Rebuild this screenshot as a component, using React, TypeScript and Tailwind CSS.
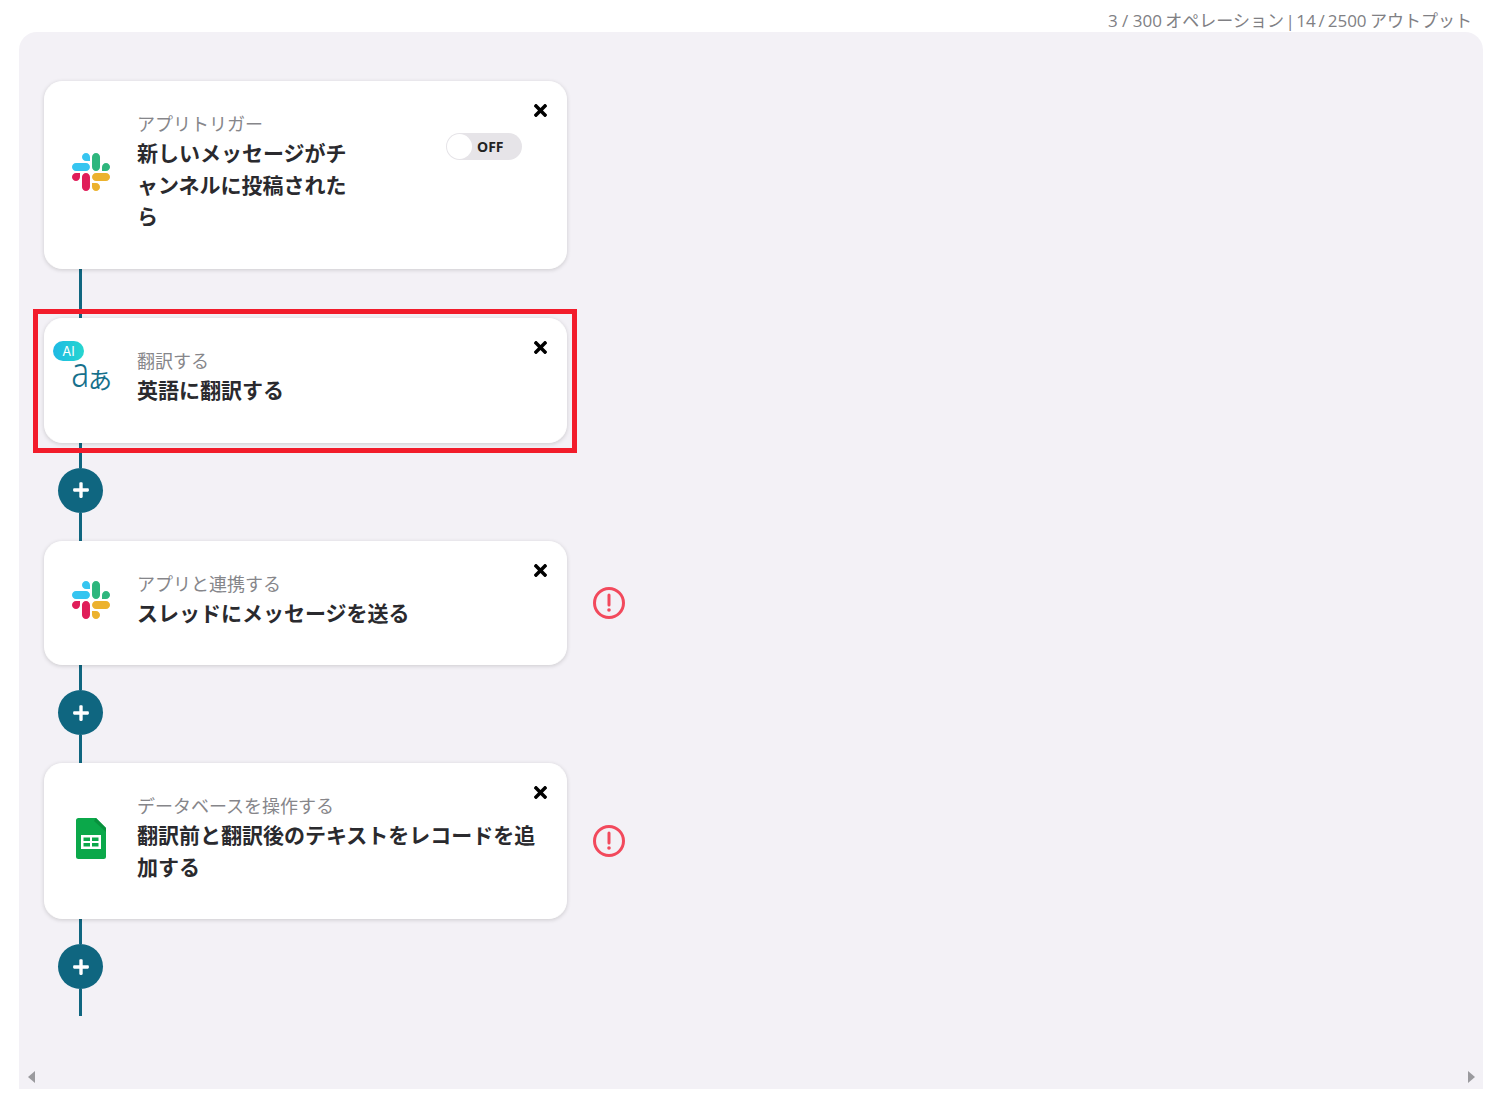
import { FaPlus, FaTimes } from "react-icons/fa";
import type { ReactNode } from "react";

const SlackLogo = () => (
    <svg className="w-[38px] h-[38px]" viewBox="0 0 122.8 122.8">
        <path fill="#E01E5A" d="M25.8 77.6c0 7.1-5.8 12.9-12.9 12.9S0 84.7 0 77.6s5.8-12.9 12.9-12.9h12.9v12.9z" />
        <path fill="#E01E5A" d="M32.3 77.6c0-7.1 5.8-12.9 12.9-12.9s12.9 5.8 12.9 12.9v32.3c0 7.1-5.8 12.9-12.9 12.9s-12.9-5.8-12.9-12.9V77.6z" />
        <path fill="#36C5F0" d="M45.2 25.8c-7.1 0-12.9-5.8-12.9-12.9S38.1 0 45.2 0s12.9 5.8 12.9 12.9v12.9H45.2z" />
        <path fill="#36C5F0" d="M45.2 32.3c7.1 0 12.9 5.8 12.9 12.9s-5.8 12.9-12.9 12.9H12.9C5.8 58.1 0 52.3 0 45.2s5.8-12.9 12.9-12.9h32.3z" />
        <path fill="#2EB67D" d="M97 45.2c0-7.1 5.8-12.9 12.9-12.9s12.9 5.8 12.9 12.9-5.8 12.9-12.9 12.9H97V45.2z" />
        <path fill="#2EB67D" d="M90.5 45.2c0 7.1-5.8 12.9-12.9 12.9s-12.9-5.8-12.9-12.9V12.9C64.7 5.8 70.5 0 77.6 0s12.9 5.8 12.9 12.9v32.3z" />
        <path fill="#ECB22E" d="M77.6 97c7.1 0 12.9 5.8 12.9 12.9s-5.8 12.9-12.9 12.9-12.9-5.8-12.9-12.9V97h12.9z" />
        <path fill="#ECB22E" d="M77.6 90.5c-7.1 0-12.9-5.8-12.9-12.9s5.8-12.9 12.9-12.9h32.3c7.1 0 12.9 5.8 12.9 12.9s-5.8 12.9-12.9 12.9H77.6z" />
    </svg>
);

const SheetsLogo = () => (
    <svg className="w-[30px] h-[41px] ml-1" viewBox="0 0 30 41">
        <path fill="#0BA84A" d="M2.5 0H20l10 10v28.5a2.5 2.5 0 0 1-2.5 2.5h-25A2.5 2.5 0 0 1 0 38.500v-36A2.500 2.500 0 0 1 2.500 0z" />
        <path fill="#08913D" d="M20 0l10 10v4L18 3z" />
        <path fill="#fff" fillRule="evenodd" d="M5 17h20v14H5zM7.500 19.500v3.500h6.500v-3.500zM16 19.500v3.500h6.500v-3.500zM7.500 25v3.500h6.500v-3.500zM16 25v3.500h6.500v-3.500z" />
    </svg>
);

const TranslateIcon = () => (
    <div className="relative w-[38px] h-[38px] text-[#16708c]">
        <span className="absolute -left-[3px] -top-[9px] text-[42px] leading-none font-light scale-x-[0.8] font-['Noto_Sans',sans-serif]">a</span>
        <span className="absolute left-[16px] top-[8px] text-[24px] leading-none font-['Noto_Sans_CJK_JP',sans-serif]">あ</span>
    </div>
);

const ErrorIcon = () => (
    <svg className="w-8 h-8 ml-[26px]" viewBox="0 0 32 32" fill="none">
        <circle cx="16" cy="16" r="14.500" stroke="#F2495C" strokeWidth="3" />
        <path d="M16 8v10" stroke="#F2495C" strokeWidth="3" strokeLinecap="round" />
        <circle cx="16" cy="23" r="1.800" fill="#F2495C" />
    </svg>
);

const Line = ({ height }: { height: string }) => (
    <div className={`w-[3px] bg-[#0f6680] ml-[35px] ${height}`} />
);

const AddStep = ({ bottom }: { bottom: string }) => (
    <div className="flex flex-col">
        <Line height="h-[25px]" />
        <button className="w-[45px] h-[45px] ml-[14px] rounded-full bg-[#0f6680] flex items-center justify-center text-white">
            <FaPlus size={18} />
        </button>
        <Line height={bottom} />
    </div>
);

type StepCardProps = {
    icon: ReactNode;
    label: string;
    title: ReactNode;
    titleWidth?: string;
    children?: ReactNode;
};

const StepCard = ({ icon, label, title, titleWidth = "w-[410px]", children }: StepCardProps) => (
    <div className="relative flex w-[523px] pt-[27px] pb-[36px] pl-[27px] bg-white rounded-[18px] border border-white shadow-[0_1px_4px_rgba(0,0,0,0.16)]">
        <div className="self-center w-[38px] mt-[4px] mr-[27px] shrink-0">{icon}</div>
        <div className={`${titleWidth} shrink-0`}>
            <div className="text-[18px] leading-[29px] text-[#86868a]">{label}</div>
            <div className="-mt-px text-[21px] leading-[31.500px] font-bold text-[#2a2a2e]">{title}</div>
        </div>
        {children}
        <FaTimes className="absolute top-[19px] right-[16px] text-black" size={19} />
    </div>
);

export default function App() {
    return (
        <div className="w-[1503px] h-[1113px] bg-white overflow-hidden font-['Noto_Sans_CJK_JP','Noto_Sans',sans-serif]">
            <div className="h-8 pr-[31px] text-right text-[17px] leading-[42px] text-[#808084] font-['Open_Sans','Noto_Sans_CJK_JP',sans-serif]">
                3 / 300<span className="ml-[-1px]"> オペレーション</span>
                <span className="[word-spacing:-3px]"> | </span>
                <span className="[word-spacing:-1.500px]">14 / 2500</span>
                <span className="ml-[-1px]"> アウトプット</span>
            </div>
            <div className="ml-[19px] mr-5 h-[1057px] bg-[#f3f1f6] rounded-t-[18px] pt-[49px] pl-[25px] relative">
                <StepCard
                    icon={<SlackLogo />}
                    label="アプリトリガー"
                    title={<>新しいメッセージがチ<br />ャンネルに投稿された<br />ら</>}
                    titleWidth="w-[220px]"
                >
                    <div className="self-start mt-[24px] ml-[89px] w-[76px] h-[27px] rounded-full bg-[#e6e4e8] flex items-center">
                        <div className="w-[25px] h-[25px] ml-[1px] rounded-full bg-white" />
                        <span className="ml-[5px] text-[14px] font-bold text-[#222] font-['Open_Sans',sans-serif]">OFF</span>
                    </div>
                </StepCard>
                <Line height="h-[49.500px]" />
                <div className="relative w-[523px]">
                    <StepCard icon={<TranslateIcon />} label="翻訳する" title="英語に翻訳する" />
                    <span className="absolute left-[9px] top-[23px] w-[31px] h-5 rounded-full bg-gradient-to-r from-[#1fb9e4] to-[#27d6cf] text-white text-[13px] leading-5 text-center font-['Inter',sans-serif]">AI</span>
                    <div className="absolute -left-[11px] -top-[9px] -right-[10px] -bottom-[10px] border-[5px] border-[#f21c2b]" />
                </div>
                <AddStep bottom="h-[28px]" />
                <div className="flex items-center">
                    <StepCard icon={<SlackLogo />} label="アプリと連携する" title="スレッドにメッセージを送る" />
                    <ErrorIcon />
                </div>
                <AddStep bottom="h-[28px]" />
                <div className="flex items-center">
                    <StepCard icon={<SheetsLogo />} label="データベースを操作する" title="翻訳前と翻訳後のテキストをレコードを追加する" titleWidth="w-[400px]" />
                    <ErrorIcon />
                </div>
                <AddStep bottom="h-[27px]" />
                <div className="absolute left-[9px] bottom-[6px] w-0 h-0 border-y-[6px] border-y-transparent border-r-[7px] border-r-[#9a9a9e]" />
                <div className="absolute right-[8px] bottom-[6px] w-0 h-0 border-y-[6px] border-y-transparent border-l-[7px] border-l-[#9a9a9e]" />
            </div>
        </div>
    );
}
